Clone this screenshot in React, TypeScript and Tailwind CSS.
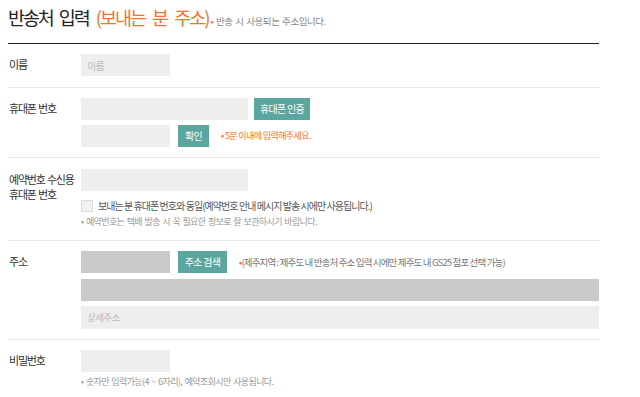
import React from "react";

const FONT = { fontFamily: '"Noto Sans CJK KR", "Noto Sans", sans-serif' };

function Btn({ children, w }: { children: React.ReactNode; w: string }) {
  return (
    <div className={`${w} h-[22px] bg-[#5ba69e] text-white text-[10px] tracking-[-0.7px] flex items-center justify-center leading-none`}>
      {children}
    </div>
  );
}

function Row({ label, children, pad }: { label: React.ReactNode; children: React.ReactNode; pad: string }) {
  return (
    <div className={`flex ${pad}`}>
      <div className="w-[73px] pl-[1px] text-[11px] text-[#333] tracking-[-1.2px] [word-spacing:1px] leading-[15px] pt-[3px]">{label}</div>
      <div className="flex-1 flex flex-col">{children}</div>
    </div>
  );
}

export default function App() {
  return (
    <div className="bg-white w-[640px] h-[397px] overflow-hidden" style={FONT}>
      <div className="ml-[8px] w-[591px]">
        <div className="h-[44px] border-b border-[#222] flex items-baseline pt-[4px]">
          <span className="text-[18.5px] text-[#222] tracking-[-2.1px] [word-spacing:4px] leading-[26px]">반송처 입력</span>
          <span className="text-[18.5px] text-[#f3722c] tracking-[-2px] [word-spacing:5px] leading-[26px] ml-[7px]">(보내는 분 주소)</span>
          <span className="text-[9.5px] text-[#888] tracking-[-0.45px] [word-spacing:1px] ml-[2px]">
            <span className="text-[#f3722c]">•</span> 반송 시 사용되는 주소입니다.
          </span>
        </div>

        <Row label="이름" pad="pt-[10px] pb-[11px] border-b border-[#e6e6e6]">
          <div className="w-[89px] h-[22px] bg-[#eeeeee] text-[10px] text-[#bbb] pl-[6px] flex items-center tracking-[-0.6px]">이름</div>
        </Row>

        <Row label="휴대폰 번호" pad="pt-[10px] pb-[10px] border-b border-[#e6e6e6]">
          <div className="flex gap-[6px]">
            <div className="w-[167px] h-[22px] bg-[#eeeeee]" />
            <Btn w="w-[56px]">휴대폰 인증</Btn>
          </div>
          <div className="flex items-center mt-[5px]">
            <div className="w-[89px] h-[22px] bg-[#eeeeee]" />
            <div className="ml-[8px]"><Btn w="w-[31px]">확인</Btn></div>
            <span className="ml-[12px] text-[9px] text-[#f3722c] tracking-[-0.6px]">• 5분 이내에 입력해주세요.</span>
          </div>
        </Row>

        <Row label={<><div>예약번호 수신용</div><div>휴대폰 번호</div></>} pad="pt-[11px] pb-[12px] border-b border-[#e6e6e6]">
          <div className="w-[167px] h-[22px] bg-[#eeeeee]" />
          <div className="flex items-center mt-[9px] h-[12px]">
            <div className="w-[12px] h-[12px] bg-[#f2f2f2] border border-[#dddddd]" />
            <span className="ml-[5px] text-[10px] text-[#555] tracking-[-0.95px] leading-[12px]">보내는 분 휴대폰 번호와 동일(예약번호 안내 메시지 발송 시에만 사용됩니다.)</span>
          </div>
          <div className="mt-[4px] text-[9px] text-[#999] tracking-[-0.6px] [word-spacing:1px] leading-[12px]">• 예약번호는 택배 발송 시 꼭 필요한 정보로 잘 보관하시기 바랍니다.</div>
        </Row>

        <Row label="주소" pad="pt-[10px] pb-[10px] border-b border-[#e6e6e6]">
          <div className="flex items-center">
            <div className="w-[89px] h-[22px] bg-[#c9c9c9]" />
            <div className="ml-[8px]"><Btn w="w-[49px]">주소 검색</Btn></div>
            <span className="ml-[12px] text-[9.5px] text-[#777] tracking-[-0.85px]"><span className="text-[#f3722c]">•</span>(제주지역 : 제주도 내 반송처 주소 입력 시에만 제주도 내 GS25 점포 선택 가능)</span>
          </div>
          <div className="mt-[6px] w-full h-[22px] bg-[#c9c9c9]" />
          <div className="mt-[5px] w-full h-[23px] bg-[#eeeeee] text-[9.5px] text-[#bbb] pl-[6px] flex items-center tracking-[-0.6px]">상세주소</div>
        </Row>

        <Row label="비밀번호" pad="pt-[10px]">
          <div className="w-[89px] h-[22px] bg-[#eeeeee]" />
          <div className="mt-[4px] text-[9px] text-[#999] tracking-[-0.6px] [word-spacing:1px] leading-[12px]">• 숫자만 입력가능(4 ~ 6자리), 예약조회시만 사용됩니다.</div>
        </Row>
      </div>
    </div>
  );
}
